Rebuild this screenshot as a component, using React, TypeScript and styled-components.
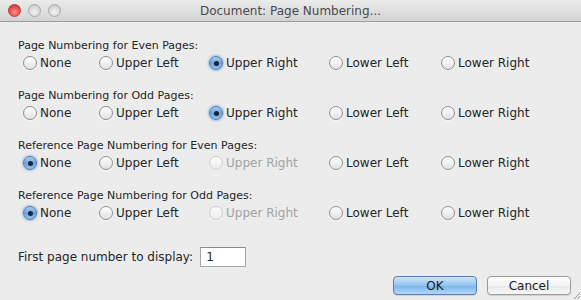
import { createGlobalStyle } from 'styled-components';
import styled from 'styled-components';

const GlobalStyle = createGlobalStyle`
	html, body {
		margin: 0;
		padding: 0;
		background: #ececec;
	}
	body {
		font-family: 'DejaVu Sans', 'Liberation Sans', sans-serif;
		font-size: 11px;
		color: #262626;
	}
`;

type Choice = 'off' | 'on' | 'disabled';

interface Section {
	title: string;
	choices: Choice[];
}

const OPTIONS = ['None', 'Upper Left', 'Upper Right', 'Lower Left', 'Lower Right'];

const SECTIONS: Section[] = [
	{ title: 'Page Numbering for Even Pages:', choices: ['off', 'off', 'on', 'off', 'off'] },
	{ title: 'Page Numbering for Odd Pages:', choices: ['off', 'off', 'on', 'off', 'off'] },
	{ title: 'Reference Page Numbering for Even Pages:', choices: ['on', 'off', 'disabled', 'off', 'off'] },
	{ title: 'Reference Page Numbering for Odd Pages:', choices: ['on', 'off', 'disabled', 'off', 'off'] },
];

const App = () => {
	return (
		<>
			<GlobalStyle />
			<Window>
				<TitleBar>
					<Lights>
						<Light $color="red" />
						<Light $color="gray" />
						<Light $color="gray" />
					</Lights>
					<Title>Document: Page Numbering...</Title>
				</TitleBar>
				<Content>
					{SECTIONS.map((section) => (
						<Group key={section.title}>
							<GroupLabel>{section.title}</GroupLabel>
							<RadioRow>
								{OPTIONS.map((option, i) => (
									<RadioItem key={option} $disabled={section.choices[i] === 'disabled'}>
										<RadioCircle $state={section.choices[i]} />
										{option}
									</RadioItem>
								))}
							</RadioRow>
						</Group>
					))}
					<FieldRow>
						First page number to display:
						<NumberBox>1</NumberBox>
					</FieldRow>
					<ButtonRow>
						<PushButton $primary>OK</PushButton>
						<PushButton>Cancel</PushButton>
					</ButtonRow>
				</Content>
				<Grip>
					<svg width="10" height="10" viewBox="0 0 10 10">
						<path d="M9 3 L3 9 M9 6 L6 9" stroke="#9a9a9a" strokeWidth="1" />
					</svg>
				</Grip>
			</Window>
		</>
	);
};

export default App;

const Window = styled.div`
	width: 581px;
	height: 300px;
	background: #ececec;
	position: relative;
	overflow: hidden;
`;

const TitleBar = styled.div`
	height: 21px;
	display: flex;
	align-items: center;
	justify-content: center;
	position: relative;
	background: linear-gradient(#ebebeb, #d3d3d3);
	border-bottom: 1px solid #9e9e9e;
`;

const Lights = styled.div`
	position: absolute;
	left: 8px;
	top: 4px;
	display: flex;
	gap: 7px;
`;

const Light = styled.div<{ $color: 'red' | 'gray' }>`
	width: 13px;
	height: 13px;
	border-radius: 50%;
	box-sizing: border-box;
	border: 1px solid ${({ $color }) => ($color === 'red' ? '#b03a3a' : '#a9a9a9')};
	background: ${({ $color }) =>
		$color === 'red'
			? 'radial-gradient(circle at 50% 65%, #ff8f8a 0%, #ee4e48 55%, #c52f2c 100%)'
			: 'radial-gradient(circle at 50% 65%, #f4f4f4 0%, #d6d6d6 60%, #bdbdbd 100%)'};
`;

const Title = styled.div`
	font-size: 12px;
	color: #4a4a4a;
`;

const Content = styled.div`
	padding: 16px 10px 0 18px;
	display: flex;
	flex-direction: column;
`;

const Group = styled.div`
	display: flex;
	flex-direction: column;
	margin-bottom: 16px;
`;

const GroupLabel = styled.div`
	height: 16px;
	line-height: 16px;
`;

const RadioRow = styled.div`
	display: grid;
	grid-template-columns: 76px 110px 120px 112px auto;
	padding-left: 5px;
	height: 18px;
	align-items: center;
`;

const RadioItem = styled.div<{ $disabled?: boolean }>`
	display: flex;
	align-items: center;
	gap: 3px;
	font-size: 12px;
	color: ${({ $disabled }) => ($disabled ? '#a3a3a3' : '#262626')};
`;

const RadioCircle = styled.span<{ $state: Choice }>`
	width: 14px;
	height: 14px;
	box-sizing: border-box;
	border-radius: 50%;
	flex-shrink: 0;
	position: relative;
	border: 1px solid
		${({ $state }) => ($state === 'on' ? '#5878a8' : $state === 'disabled' ? '#cdcdcd' : '#8f8f8f')};
	background: ${({ $state }) =>
		$state === 'on'
			? 'linear-gradient(#a9cdf2, #6aa4e0 50%, #8fc2f2)'
			: $state === 'disabled'
				? 'linear-gradient(#fbfbfb, #ececec)'
				: 'linear-gradient(#ffffff, #e2e2e2)'};
	box-shadow: ${({ $state }) => ($state === 'on' ? '0 0 2px 1px rgba(110, 160, 220, 0.6)' : '0 1px 0 rgba(255,255,255,0.6)')};

	&::after {
		content: '';
		display: ${({ $state }) => ($state === 'on' ? 'block' : 'none')};
		position: absolute;
		width: 5px;
		height: 5px;
		border-radius: 50%;
		background: #1c2430;
		left: 3.5px;
		top: 3.5px;
	}
`;

const FieldRow = styled.div`
	display: flex;
	align-items: center;
	gap: 7px;
	margin-top: 9px;
	height: 20px;
	font-size: 12px;
`;

const NumberBox = styled.div`
	width: 46px;
	height: 20px;
	box-sizing: border-box;
	background: #ffffff;
	border: 1px solid #a6a6a6;
	border-top-color: #8c8c8c;
	padding: 2px 5px;
	font-size: 12px;
`;

const ButtonRow = styled.div`
	display: flex;
	justify-content: flex-end;
	gap: 10px;
	margin-top: 9px;
`;

const PushButton = styled.div<{ $primary?: boolean }>`
	width: 84px;
	height: 19px;
	box-sizing: border-box;
	display: flex;
	align-items: center;
	justify-content: center;
	border-radius: 4px;
	font-size: 12px;
	color: #1a1a1a;
	border: 1px solid ${({ $primary }) => ($primary ? '#5a7fb2' : '#9b9b9b')};
	background: ${({ $primary }) =>
		$primary ? 'linear-gradient(#cfe4f8, #93c3ef 50%, #78b3ea 51%, #b4d8f8)' : 'linear-gradient(#ffffff, #f3f3f3 50%, #e9e9e9 51%, #f7f7f7)'};
	box-shadow: 0 1px 1px rgba(0, 0, 0, 0.12);
`;

const Grip = styled.div`
	position: absolute;
	right: 0;
	bottom: 0;
	width: 10px;
	height: 10px;
	line-height: 0;
`;
